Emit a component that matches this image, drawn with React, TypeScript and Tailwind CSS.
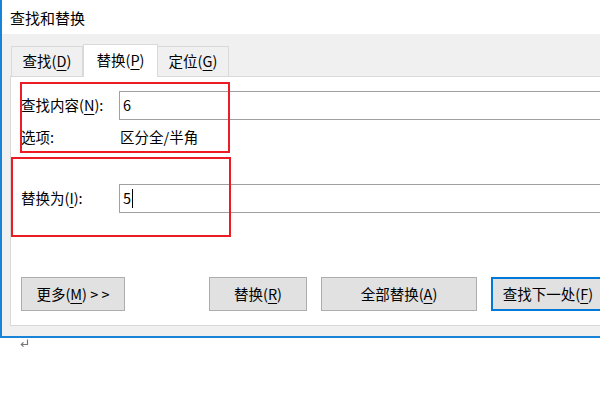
import React from "react";

function Key({ k }: { k: string }) {
	return <span className="underline underline-offset-[3px] decoration-[1px]">{k}</span>;
}

function Tab({ label, k, w, active, first }: { label: string; k: string; w: string; active?: boolean; first?: boolean }) {
	return (
		<div
			className={
				active
					? `relative z-10 -mb-px flex h-[33px] items-center justify-center border border-b-0 border-[#d9d9d9] bg-white pb-[2px] ${w}`
					: `flex h-[30px] items-center justify-center border border-b-0 border-[#d9d9d9] bg-[#f0f0f0] ${first ? "" : "border-l-0"} ${w}`
			}
		>
			<span className="leading-none">
				{label}(<Key k={k} />)
			</span>
		</div>
	);
}

function Btn({ children, w, primary }: { children: React.ReactNode; w: string; primary?: boolean }) {
	return (
		<button
			type="button"
			className={`flex h-[34px] shrink-0 items-center justify-center bg-[#e1e1e1] leading-none ${w} ${
				primary ? "border-2 border-[#0078d7]" : "border border-[#adadad]"
			}`}
		>
			{children}
		</button>
	);
}

export default function App() {
	return (
		<div
			className="relative h-[400px] w-[600px] overflow-hidden bg-white text-[14.5px] text-black"
			style={{ fontFamily: '"Noto Sans CJK SC", "Noto Sans", sans-serif' }}
		>
			<div className="flex h-[338px] w-[660px] flex-col border-b-2 border-l-2 border-[#1883d7]">
				<div className="flex h-[34px] shrink-0 items-center bg-white pl-[8px] text-[15px] leading-none">
					查找和替换
				</div>
				<div className="flex flex-1 flex-col bg-[#f0f0f0] pb-[10px] pl-[8px] pt-[10px]">
					<div className="flex h-[32px] shrink-0 items-end pl-[1px]">
						<Tab label="查找" k="D" w="w-[72px]" first />
						<Tab label="替换" k="P" w="w-[75px]" active />
						<Tab label="定位" k="G" w="w-[71px]" />
					</div>
					<div className="flex flex-1 flex-col border border-[#d9d9d9] bg-white pl-[10px] pt-[14px]">
						<div className="flex h-[29px] items-center">
							<div className="w-[98px] leading-none">
								查找内容(<Key k="N" />):
							</div>
							<div className="flex h-[29px] flex-1 items-center border border-[#a0a0a0] pl-[3px] leading-none">6</div>
						</div>
						<div className="mt-[6px] flex h-[22px] items-center leading-none">
							<div className="w-[99px]">选项:</div>
							<div>区分全/半角</div>
						</div>
						<div className="mt-[36px] flex h-[29px] items-center">
							<div className="w-[98px] leading-none">
								替换为(<Key k="I" />):
							</div>
							<div className="flex h-[29px] flex-1 items-center border border-[#a0a0a0] pl-[3px] leading-none">
								5<span className="ml-[1px] inline-block h-[19px] w-px bg-black" />
							</div>
						</div>
						<div className="mt-[64px] flex items-center">
							<Btn w="w-[104px]">
								更多(<Key k="M" />)&nbsp;&gt; &gt;
							</Btn>
							<div className="ml-[84px] flex gap-[14px]">
								<Btn w="w-[98px]">
									替换(<Key k="R" />)
								</Btn>
								<Btn w="w-[156px]">
									全部替换(<Key k="A" />)
								</Btn>
								<Btn w="w-[114px]" primary>
									查找下一处(<Key k="F" />)
								</Btn>
							</div>
						</div>
					</div>
				</div>
			</div>
			<div className="ml-[20px] mt-[1px]">
				<svg width="9" height="9" viewBox="0 0 9 9" fill="none" stroke="#777" strokeWidth="1.2">
					<path d="M7.5 0.5 V5.5 H1.5" />
					<path d="M3.5 3.3 L1.3 5.5 L3.5 7.7" />
				</svg>
			</div>

			<div className="absolute left-[20px] top-[82px] h-[71px] w-[210px] border-2 border-[#ec1c24]" />
			<div className="absolute left-[11px] top-[157px] h-[80px] w-[220px] border-2 border-[#ec1c24]" />
		</div>
	);
}
